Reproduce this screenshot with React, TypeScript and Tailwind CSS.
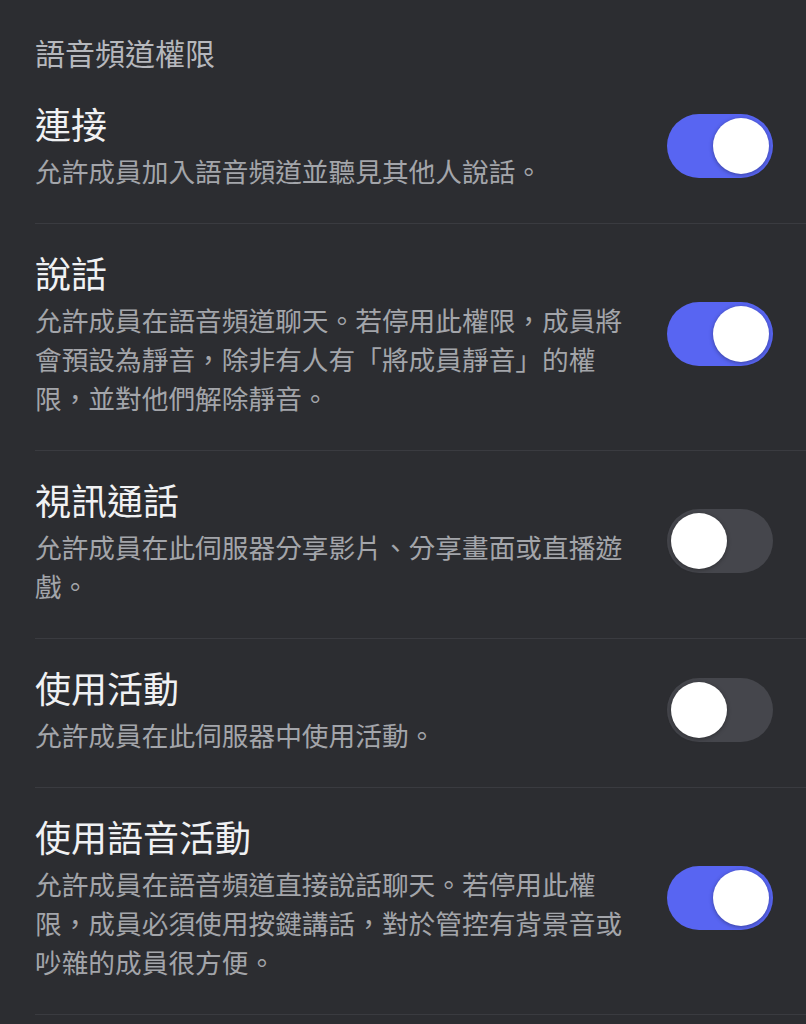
const rows = [
  { title: '連接', desc: '允許成員加入語音頻道並聽見其他人說話。', on: true },
  { title: '說話', desc: '允許成員在語音頻道聊天。若停用此權限，成員將會預設為靜音，除非有人有「將成員靜音」的權限，並對他們解除靜音。', on: true },
  { title: '視訊通話', desc: '允許成員在此伺服器分享影片、分享畫面或直播遊戲。', on: false },
  { title: '使用活動', desc: '允許成員在此伺服器中使用活動。', on: false },
  { title: '使用語音活動', desc: '允許成員在語音頻道直接說話聊天。若停用此權限，成員必須使用按鍵講話，對於管控有背景音或吵雜的成員很方便。', on: true },
]

function Toggle({ on }: { on: boolean }) {
  return (
    <div className={`flex h-[64px] w-[106px] shrink-0 items-center rounded-full p-[4px] ${on ? 'justify-end bg-[#5865f2]' : 'justify-start bg-[#45464c]'}`}>
      <div className="h-[56px] w-[56px] rounded-full bg-white shadow-[0_1px_4px_rgba(0,0,0,0.35)]" />
    </div>
  )
}

export default function App() {
  return (
    <div className="min-h-screen bg-[#2c2d31] pl-[35px] font-['Noto_Sans_CJK_TC','Noto_Sans',sans-serif]">
      <h2 className="pt-[31px] pb-[2px] text-[30px] leading-[42px] text-[#b6b8bd]">語音頻道權限</h2>
      {rows.map(r => (
        <div key={r.title} className="flex items-center gap-10 border-b border-[#3a3b40] pt-[26px] pb-[33px] pr-[33px]">
          <div className="flex-1">
            <div className="text-[36px] leading-[44px] text-[#f0f1f3]">{r.title}</div>
            <p className="mt-[6px] text-[26.7px] leading-[39px] text-[#a3a5aa]">{r.desc}</p>
          </div>
          <Toggle on={r.on} />
        </div>
      ))}
    </div>
  )
}
